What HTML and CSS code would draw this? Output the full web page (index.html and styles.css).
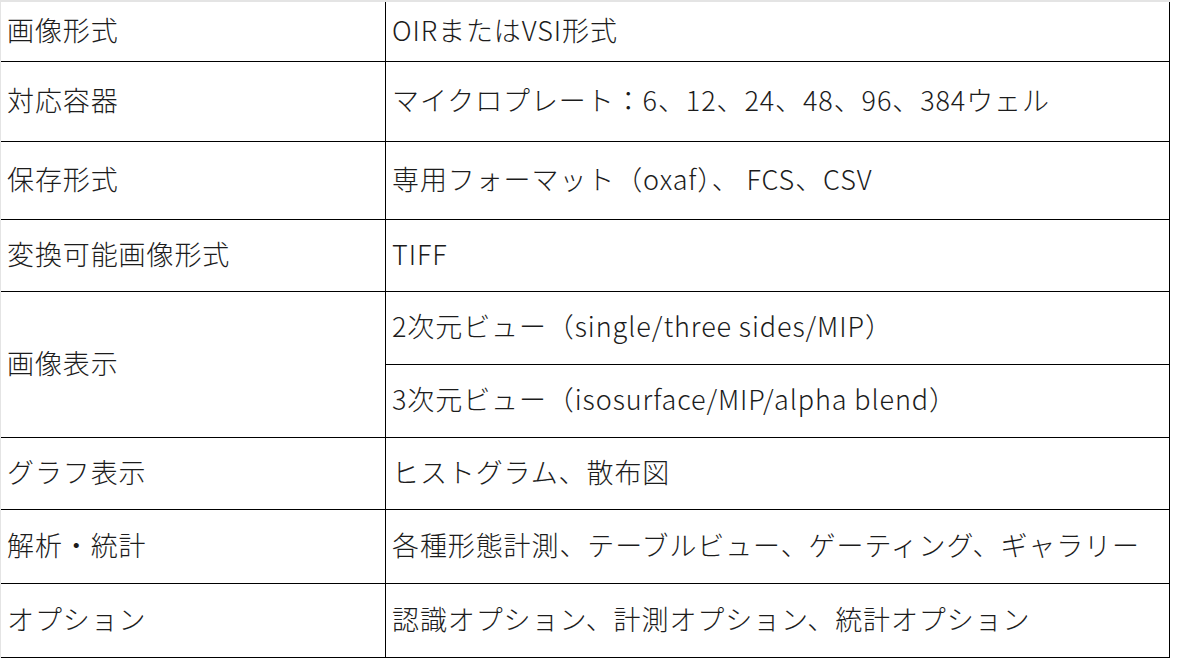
FILE: index.html
```html
<!DOCTYPE html>
<html lang="ja">
<head>
<meta charset="utf-8">
<link rel="stylesheet" href="styles.css">
</head>
<body>
<div class="frame">
<table class="spec">
<tbody>
<tr class="r1"><th>画像形式</th><td>OIRまたはVSI形式</td></tr>
<tr class="r2"><th>対応容器</th><td>マイクロプレート：6、12、24、48、96、384ウェル</td></tr>
<tr class="r3"><th>保存形式</th><td>専用フォーマット（oxaf）、 FCS、CSV</td></tr>
<tr class="r4"><th>変換可能画像形式</th><td>TIFF</td></tr>
<tr class="r5"><th rowspan="2">画像表示</th><td>2次元ビュー（single/three sides/MIP）</td></tr>
<tr class="r6"><td>3次元ビュー（isosurface/MIP/alpha blend）</td></tr>
<tr class="r7"><th>グラフ表示</th><td>ヒストグラム、散布図</td></tr>
<tr class="r8"><th>解析・統計</th><td>各種形態計測、テーブルビュー、ゲーティング、ギャラリー</td></tr>
<tr class="r9"><th>オプション</th><td>認識オプション、計測オプション、統計オプション</td></tr>
</tbody>
</table>
</div>
</body>
</html>
```

FILE: styles.css
```css
html, body {
  margin: 0;
  padding: 0;
  background: #ffffff;
}

.frame {
  display: inline-block;
  border-top: 2px solid #e4e4e4;
  border-left: 1px solid #e4e4e4;
}

.spec {
  border-collapse: separate;
  border-spacing: 0;
  font-family: "Noto Sans CJK JP", "Noto Sans", sans-serif;
  font-size: 27px;
  color: #1c1c1c;
  font-weight: 300;
  letter-spacing: 0.9px;
}

.spec th,
.spec td {
  box-sizing: border-box;
  border-bottom: 1px solid #000;
  padding: 0 0 3px 6px;
  text-align: left;
  vertical-align: middle;
  font-weight: 300;
  line-height: 1.2;
  white-space: nowrap;
}

.spec th {
  width: 384px;
}

.spec td {
  width: 785px;
  border-left: 1px solid #000;
  border-right: 1px solid #000;
}

.r1 th, .r1 td { height: 60px; }
.r2 th, .r2 td { height: 80px; }
.r3 th, .r3 td { height: 78px; }
.r4 th, .r4 td { height: 72px; }
.r5 td { height: 73px; }
.r6 td { height: 73px; }
.r7 th, .r7 td { height: 72px; }
.r8 th, .r8 td { height: 74px; }
.r9 th, .r9 td { height: 74px; }
```
